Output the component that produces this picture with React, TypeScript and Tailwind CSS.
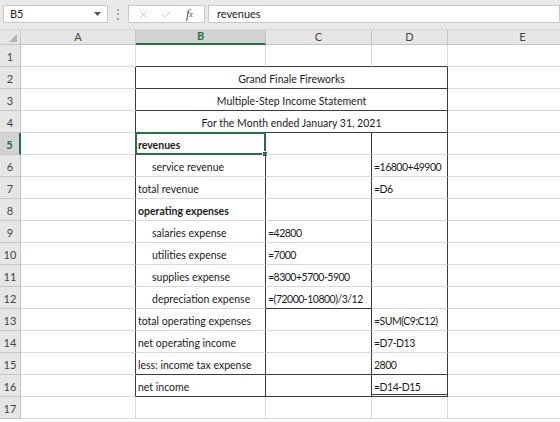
import { X, Check } from 'lucide-react';
import clsx from 'clsx';

type Row = {
  n: number;
  b?: string;
  c?: string;
  d?: string;
  bold?: boolean;
  indent?: boolean;
  merged?: string;
};

const rows: Row[] = [
  { n: 1 },
  { n: 2, merged: 'Grand Finale Fireworks' },
  { n: 3, merged: 'Multiple-Step Income Statement' },
  { n: 4, merged: 'For the Month ended January 31, 2021' },
  { n: 5, b: 'revenues', bold: true },
  { n: 6, b: 'service revenue', indent: true, d: '=16800+49900' },
  { n: 7, b: 'total revenue', d: '=D6' },
  { n: 8, b: 'operating expenses', bold: true },
  { n: 9, b: 'salaries expense', indent: true, c: '=42800' },
  { n: 10, b: 'utilities expense', indent: true, c: '=7000' },
  { n: 11, b: 'supplies expense', indent: true, c: '=8300+5700-5900' },
  { n: 12, b: 'depreciation expense', indent: true, c: '=(72000-10800)/3/12' },
  { n: 13, b: 'total operating expenses', d: '=SUM(C9:C12)' },
  { n: 14, b: 'net operating income', d: '=D7-D13' },
  { n: 15, b: 'less: income tax expense', d: '2800' },
  { n: 16, b: 'net income', d: '=D14-D15' },
  { n: 17 },
];

function Cell({
  text,
  bold,
  indent,
  right,
  bottom,
  double,
  merged,
  selected,
  tight,
}: {
  text?: string;
  bold?: boolean;
  indent?: boolean;
  right?: boolean;
  bottom?: boolean;
  double?: boolean;
  merged?: boolean;
  selected?: boolean;
  tight?: boolean;
}) {
  return (
    <div
      className={clsx(
        'relative h-[22px] flex items-end px-[2px] border-r border-b whitespace-nowrap leading-[14px]',
        right ? 'border-r-[#3b3b3b]' : 'border-r-[#dadada]',
        double
          ? 'border-b-[3px] border-double border-b-[#3b3b3b] pb-0'
          : bottom
            ? 'border-b-[#3b3b3b] pb-[2px]'
            : 'border-b-[#dadada] pb-[2px]',
        bold && 'font-bold',
        indent && 'pl-[16px]',
        tight && 'tracking-[-0.5px]',
        merged && 'col-span-3 justify-center'
      )}
    >
      {text}
      {selected && (
        <div className="absolute -top-[1px] -left-[1px] -right-[1px] bottom-[-1px] border-2 border-[#217346]">
          <div className="absolute -right-[4px] -bottom-[4px] w-[6px] h-[6px] bg-[#217346] border border-white" />
        </div>
      )}
    </div>
  );
}

function FormulaBar() {
  return (
    <div className="h-[30px] bg-[#e9e9e9] flex items-start pt-[5px] pl-[3px] border-b border-[#d4d4d4]">
      <div className="w-[105px] h-[18px] bg-white border border-[#c8c8c8] flex items-center justify-between pl-[6px] pr-[6px] text-[11px] text-[#222]">
        <span>B5</span>
        <svg width="7" height="4" viewBox="0 0 7 4">
          <path d="M0 0h7L3.5 4z" fill="#555" />
        </svg>
      </div>
      <div className="w-[20px] h-[18px] flex items-center justify-center text-[#888] text-[12px]">⋮</div>
      <div className="w-[77px] h-[18px] bg-white border border-[#c8c8c8] flex items-center">
        <div className="w-[30px] flex justify-center">
          <X className="w-[11px] h-[11px] text-[#b0b0b0]" strokeWidth={1.5} />
        </div>
        <div className="w-[17px] flex justify-center">
          <Check className="w-[11px] h-[11px] text-[#b0b0b0]" strokeWidth={1.5} />
        </div>
        <div className="w-[30px] flex justify-center font-['Liberation_Serif',serif] italic text-[12px] text-[#444] leading-none">
          f<span className="text-[8px] mt-[3px]">x</span>
        </div>
      </div>
      <div className="ml-[3px] flex-1 h-[18px] bg-white border border-[#c8c8c8] flex items-center pl-[8px] text-[11px] text-[#222]">
        revenues
      </div>
    </div>
  );
}

export default function App() {
  const cols = ['A', 'B', 'C', 'D', 'E'];
  return (
    <div className="w-[560px] h-[422px] overflow-hidden bg-white font-['Lato',sans-serif] text-[10.5px] text-[#1a1a1a]">
      <FormulaBar />
      <div className="grid grid-cols-[21px_115px_130px_106px_76px_150px]">
        <div className="relative h-[15px] bg-[#e6e6e6] border-r border-b border-[#c4c4c4]">
          <svg className="absolute right-[3px] bottom-[2px]" width="8" height="8" viewBox="0 0 8 8">
            <path d="M8 0V8H0z" fill="#b5b5b5" />
          </svg>
        </div>
        {cols.map((c) => (
          <div
            key={c}
            className={clsx(
              'h-[15px] flex items-center justify-center border-r text-[11px]',
              c === 'B'
                ? 'bg-[#d3d3d3] text-[#217346] font-bold border-b-2 border-b-[#217346] border-r-[#c4c4c4]'
                : 'bg-[#e6e6e6] text-[#444] border-b border-[#c4c4c4]'
            )}
          >
            {c}
          </div>
        ))}
        {rows.map((r) => {
          const n = r.n;
          const inBox = n >= 2 && n <= 16;
          const body = n >= 5 && n <= 16;
          return [
            <div
              key={`h${n}`}
              className={clsx(
                'h-[22px] flex items-center justify-center pt-[4px] border-b text-[11px]',
                n === 5
                  ? 'bg-[#d3d3d3] text-[#217346] font-bold border-r-2 border-r-[#217346] border-b-[#c4c4c4]'
                  : 'bg-[#e6e6e6] text-[#444] border-r border-[#c4c4c4]'
              )}
            >
              {n}
            </div>,
            <Cell key={`a${n}`} right={inBox} />,
            ...(r.merged
              ? [<Cell key={`m${n}`} text={r.merged} merged right bottom />]
              : [
                  <Cell
                    key={`b${n}`}
                    text={r.b}
                    bold={r.bold}
                    indent={r.indent}
                    right={body}
                    bottom={n === 1 || n === 15 || n === 16}
                    selected={n === 5}
                  />,
                  <Cell
                    key={`c${n}`}
                    text={r.c}
                    tight
                    right={body}
                    bottom={n === 1 || n === 12 || n === 15 || n === 16}
                  />,
                  <Cell
                    key={`d${n}`}
                    text={r.d}
                    tight
                    right={inBox}
                    bottom={n === 1 || n === 15}
                    double={n === 16}
                  />,
                ]),
            <Cell key={`e${n}`} />,
          ];
        })}
      </div>
    </div>
  );
}
